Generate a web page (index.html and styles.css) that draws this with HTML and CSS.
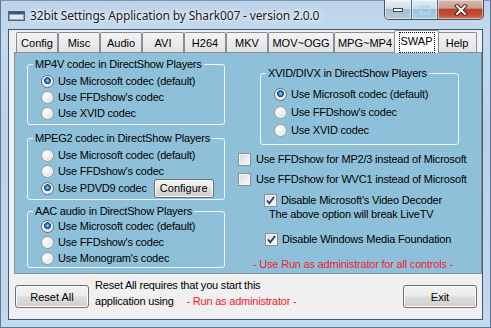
FILE: index.html
```html
<!DOCTYPE html>
<html>
<head>
<meta charset="utf-8">
<link rel="stylesheet" href="styles.css">
</head>
<body>
<div class="window">
  <div class="titlebar">
    <svg class="appicon" width="17" height="10" viewBox="0 0 17 10">
      <rect x="0.5" y="0.5" width="16" height="9" fill="#8fa8c0" stroke="#4f6278"/>
      <rect x="1" y="1" width="15" height="2" fill="#3d5575"/>
      <rect x="2" y="4" width="13" height="4" fill="#dfe9f2"/>
    </svg>
    <span class="title">32bit Settings Application by Shark007 - version 2.0.0</span>
    <div class="captions">
      <div class="cap cap-min">
        <svg width="12" height="6" viewBox="0 0 12 6"><rect x="1.5" y="1.5" width="9" height="3" fill="#fff" stroke="#3a4656"/></svg>
      </div>
      <div class="cap cap-max">
        <svg width="12" height="10" viewBox="0 0 12 10"><rect x="1.5" y="1.5" width="9" height="7" fill="none" stroke="#b9d3e6" stroke-width="2"/></svg>
      </div>
      <div class="cap cap-close">
        <svg width="14" height="12" viewBox="0 0 14 12"><path d="M3 2 L11 10 M11 2 L3 10" stroke="#4a1c14" stroke-width="4" stroke-linecap="square"/><path d="M3 2 L11 10 M11 2 L3 10" stroke="#fff" stroke-width="2" stroke-linecap="square"/></svg>
      </div>
    </div>
  </div>
  <div class="client">
    <div class="tabs">
      <div class="tab w42">Config</div>
      <div class="tab w42">Misc</div>
      <div class="tab w42">Audio</div>
      <div class="tab w42">AVI</div>
      <div class="tab w42">H264</div>
      <div class="tab w42">MKV</div>
      <div class="tab w66">MOV~OGG</div>
      <div class="tab w62">MPG~MP4</div>
      <div class="tab sel"><span class="focus">SWAP</span></div>
      <div class="tab w40">Help</div>
    </div>
    <div class="page">
      <div class="col-left">
        <fieldset class="group g1">
          <legend>MP4V codec in DirectShow Players</legend>
          <div class="opts">
            <div class="row"><span class="radio on"></span>Use Microsoft codec (default)</div>
            <div class="row"><span class="radio"></span>Use FFDshow's codec</div>
            <div class="row"><span class="radio"></span>Use XVID codec</div>
          </div>
        </fieldset>
        <fieldset class="group g2">
          <legend>MPEG2 codec in DirectShow Players</legend>
          <div class="opts">
            <div class="row"><span class="radio"></span>Use Microsoft codec (default)</div>
            <div class="row"><span class="radio"></span>Use FFDshow's codec</div>
            <div class="row row-btn"><span class="radio on"></span>Use PDVD9 codec<span class="btn btn-cfg">Configure</span></div>
          </div>
        </fieldset>
        <fieldset class="group g3">
          <legend>AAC audio in DirectShow Players</legend>
          <div class="opts">
            <div class="row"><span class="radio on"></span>Use Microsoft codec (default)</div>
            <div class="row"><span class="radio"></span>Use FFDshow's codec</div>
            <div class="row"><span class="radio"></span>Use Monogram's codec</div>
          </div>
        </fieldset>
      </div>
      <div class="col-right">
        <fieldset class="group g4">
          <legend>XVID/DIVX in DirectShow Players</legend>
          <div class="opts">
            <div class="row"><span class="radio on"></span>Use Microsoft codec (default)</div>
            <div class="row"><span class="radio"></span>Use FFDshow's codec</div>
            <div class="row"><span class="radio"></span>Use XVID codec</div>
          </div>
        </fieldset>
        <div class="chk c1"><span class="box"></span>Use FFDshow for MP2/3 instead of Microsoft</div>
        <div class="chk c2"><span class="box"></span>Use FFDshow for WVC1 instead of Microsoft</div>
        <div class="chk c3"><span class="box on"><svg width="11" height="11" viewBox="0 0 11 11"><path d="M2 5.5 L4.3 8.3 L9 2" fill="none" stroke="#263c66" stroke-width="1.8"/></svg></span>Disable Microsoft's Video Decoder</div>
        <div class="note">The above option will break LiveTV</div>
        <div class="chk c4"><span class="box on"><svg width="11" height="11" viewBox="0 0 11 11"><path d="M2 5.5 L4.3 8.3 L9 2" fill="none" stroke="#263c66" stroke-width="1.8"/></svg></span>Disable Windows Media Foundation</div>
        <div class="red warn">- Use Run as administrator for all controls -</div>
      </div>
    </div>
    <div class="footer">
      <span class="btn btn-foot">Reset All</span>
      <div class="foot-text">
        <div>Reset All requires that you start this</div>
        <div>application using <span class="red gap">- Run as administrator -</span></div>
      </div>
      <span class="btn btn-foot exit">Exit</span>
    </div>
  </div>
</div>
</body>
</html>
```

FILE: styles.css
```css
html, body {
  margin: 0;
  padding: 0;
}
body {
  width: 491px;
  height: 328px;
  overflow: hidden;
  font-family: "Liberation Sans", Arial, sans-serif;
  font-size: 11px;
  letter-spacing: -0.2px;
  color: #000;
}
.window {
  width: 491px;
  height: 328px;
  box-sizing: border-box;
  padding: 0 7px 7px 7px;
  display: flex;
  flex-direction: column;
  background: linear-gradient(180deg, #bcd3ea 0%, #c4daee 12%, #b9d2e9 40%, #c3d9ec 100%);
  border: 1px solid #5d7995;
  border-top-color: #7a95b0;
}
.titlebar {
  height: 28px;
  display: flex;
  align-items: flex-start;
  flex-shrink: 0;
}
.appicon {
  margin: 10px 0 0 0;
  flex-shrink: 0;
}
.title {
  margin: 7px 0 0 5px;
  font-family: "Noto Sans", "Open Sans", sans-serif;
  font-size: 12px;
  letter-spacing: -0.15px;
  line-height: 16px;
  color: #1a1a1a;
  text-shadow: 0 0 6px #ffffff, 0 0 3px #ffffff;
  white-space: nowrap;
}
.captions {
  margin-left: auto;
  margin-top: -1px;
  margin-right: -1px;
  display: flex;
  height: 19px;
  border: 1px solid #40566f;
  border-top: none;
  border-radius: 0 0 5px 5px;
  overflow: hidden;
}
.cap {
  height: 19px;
  display: flex;
  align-items: center;
  justify-content: center;
  box-shadow: inset 0 0 0 1px rgba(255,255,255,0.45);
}
.cap-min {
  width: 26px;
  border-right: 1px solid #56697e;
  background: linear-gradient(180deg, #e7eef5 0%, #d3dee9 45%, #a9bccf 50%, #b8cadb 100%);
}
.cap-max {
  width: 25px;
  border-right: 1px solid #56697e;
  background: linear-gradient(180deg, #e2eef7 0%, #c9dfee 45%, #99c2de 50%, #a7d0e8 100%);
}
.cap-close {
  width: 45px;
  background: linear-gradient(180deg, #d6b9b0 0%, #c8a196 42%, #b8442a 50%, #c24a2e 75%, #d17a5f 100%);
}
.client {
  flex: 1;
  background: #f0f0f0;
  border: 1px solid #3b5878;
  padding: 2px 0 0 5px;
  display: flex;
  flex-direction: column;
}
.tabs {
  display: flex;
  align-items: flex-end;
  height: 20px;
  padding-left: 2px;
}
.tab {
  height: 20px;
  box-sizing: border-box;
  border: 1px solid #898c95;
  border-bottom: none;
  border-radius: 2px 2px 0 0;
  background: linear-gradient(180deg, #f3f3f3 0%, #ebebeb 50%, #e2e2e2 100%);
  display: flex;
  align-items: center;
  justify-content: center;
  padding-top: 1px;
  flex-shrink: 0;
  white-space: nowrap;
  letter-spacing: 0;
}
.w42 { width: 42px; }
.w66 { width: 66px; }
.w62 { width: 62px; }
.w40 { width: 40px; }
.tab.sel {
  width: 45px;
  height: 23px;
  margin: 0 -2px -1px -2px;
  background: #ffffff;
  position: relative;
  z-index: 1;
  align-items: flex-start;
  padding-top: 1px;
}
.focus {
  display: block;
  border: 1px dotted #000;
  padding: 2px 1px 5px 1px;
  line-height: 12px;
  letter-spacing: 0;
}
.page {
  width: 468px;
  height: 222px;
  box-sizing: border-box;
  border: 1px solid #898c95;
  background: #8ec0d9;
  display: grid;
  grid-template-columns: 198px 1fr;
  column-gap: 13px;
  padding: 4px 0 0 12px;
  flex-shrink: 0;
}
.col-left, .col-right {
  display: flex;
  flex-direction: column;
  align-items: flex-start;
}
.group {
  margin: 0;
  padding: 0;
  border: 1px solid #f2f7fa;
  border-radius: 3px;
  box-sizing: border-box;
  min-width: 0;
}
.group legend {
  margin-left: 5px;
  padding: 0 2px;
  line-height: 14px;
  white-space: nowrap;
}
.g1, .g2, .g3 { width: 198px; }
.opts {
  padding: 2px 0 3px 13px;
}
.row {
  display: flex;
  align-items: center;
  height: 16px;
  white-space: nowrap;
}
.radio {
  width: 13px;
  height: 13px;
  box-sizing: border-box;
  border-radius: 50%;
  border: 1px solid #9a9c9e;
  background: radial-gradient(circle at 35% 35%, #ffffff 0%, #eeeeee 45%, #d4d4d4 100%);
  box-shadow: inset 0 0 0 1px #f7f7f7;
  margin-right: 4px;
  flex-shrink: 0;
}
.radio.on {
  border-color: #5b6e85;
  background:
    radial-gradient(circle at 50% 42%, #a9dcff 0px, #3e8fd8 1.4px, #15427f 3.2px, rgba(0,0,0,0) 3.8px),
    radial-gradient(circle at 35% 35%, #ffffff 0%, #eeeeee 45%, #d4d4d4 100%);
}
.g2 { margin-top: 6px; }
.g2 .opts { padding-bottom: 2px; }
.row-btn { height: 18px; }
.btn {
  display: flex;
  align-items: center;
  justify-content: center;
  box-sizing: border-box;
  border: 1px solid #707070;
  border-radius: 3px;
  background: linear-gradient(180deg, #f2f2f2 0%, #ebebeb 48%, #dddddd 52%, #cfcfcf 100%);
  box-shadow: inset 0 0 0 1px #fbfbfb;
  letter-spacing: 0;
  flex-shrink: 0;
}
.btn-cfg {
  width: 60px;
  height: 19px;
  margin-left: 7px;
}
.g3 { margin-top: 4px; }
.g3 .opts { padding: 0 0 1px 13px; }
.g4 {
  width: 199px;
  margin: 9px 0 0 22px;
}
.g4 .opts { padding: 5px 0 5px 13px; }
.g4 .row { height: 18px; }
.chk {
  display: flex;
  align-items: center;
  height: 16px;
  white-space: nowrap;
}
.box {
  width: 13px;
  height: 13px;
  box-sizing: border-box;
  border: 1px solid #8e8f8f;
  background: linear-gradient(135deg, #d6d6d6 0%, #eeeeee 60%, #fafafa 100%);
  box-shadow: inset 0 0 0 1px #f5f5f5;
  display: flex;
  align-items: center;
  justify-content: center;
  flex-shrink: 0;
  margin-right: 5px;
}
.box.on { margin-right: 4px; }
.c1 { margin-top: 6px; }
.c2 { margin-top: 4px; }
.c3 { margin: 5px 0 0 26px; }
.note {
  margin: -1px 0 0 31px;
  line-height: 14px;
  white-space: nowrap;
}
.c4 { margin: 10px 0 0 27px; }
.red { color: #f01a32; }
.warn {
  margin: 10px 0 0 15px;
  line-height: 14px;
  white-space: nowrap;
}
.footer {
  display: flex;
  align-items: flex-start;
  padding: 3px 5px 0 1px;
}
.btn-foot {
  width: 74px;
  height: 23px;
  margin-top: 8px;
}
.foot-text {
  margin-left: 6px;
  line-height: 16px;
  white-space: nowrap;
}
.gap { margin-left: 10px; }
.exit { margin-left: auto; }
```
